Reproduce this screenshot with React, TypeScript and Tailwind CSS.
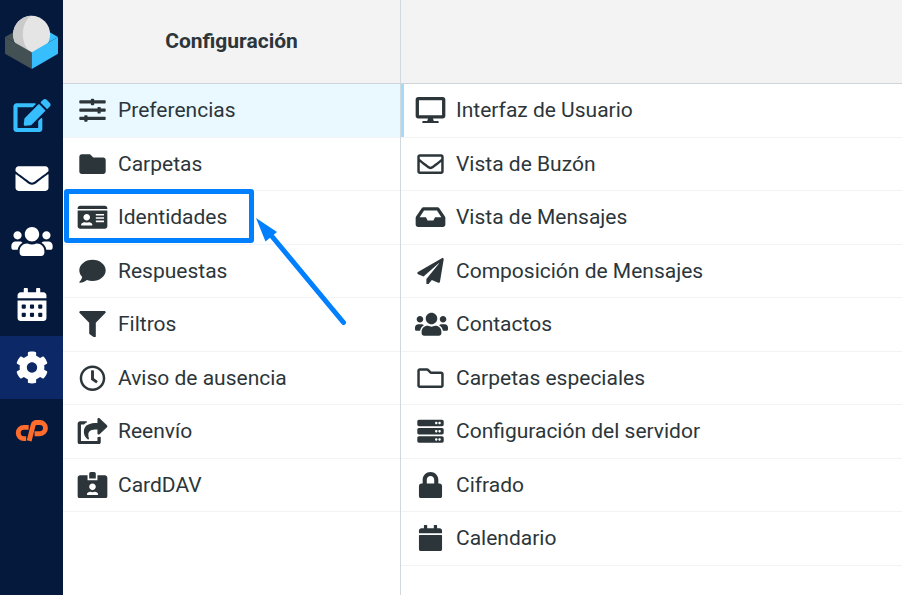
import type { IconType } from "react-icons";
import {
  FaCalendar,
  FaCalendarAlt,
  FaCog,
  FaComment,
  FaDesktop,
  FaEdit,
  FaEnvelope,
  FaFilter,
  FaFolder,
  FaIdCard,
  FaIdCardAlt,
  FaInbox,
  FaLock,
  FaPaperPlane,
  FaRegClock,
  FaRegEnvelope,
  FaRegFolder,
  FaServer,
  FaShareSquare,
  FaSlidersH,
  FaUsers,
} from "react-icons/fa";

type Item = {
  label: string;
  icon: IconType;
  iconClass?: string;
  selected?: boolean;
  marked?: boolean;
};

type Task = {
  name: string;
  icon: IconType;
  className: string;
};

// hosting panel mark: an open ring joined to a slanted bowl
const PanelMark: IconType = ({ className }) => (
  <svg viewBox="-4.5 -6 41.25 33" className={className} fill="none" stroke="currentColor" strokeWidth="4.9">
    <path d="M12.8 7.4H8a5.6 5.6 0 0 0 0 11.2h2.3" strokeLinejoin="round" />
    <path d="M13.3 20.9 17.2 5.3Q18 2.5 20.6 2.5H24a5.6 5.6 0 0 1 0 11.2H18.7" />
  </svg>
);

const tasks: Task[] = [
  { name: "compose", icon: FaEdit, className: "text-[#37beff]" },
  { name: "mail", icon: FaEnvelope, className: "text-white" },
  { name: "contacts", icon: FaUsers, className: "text-white" },
  { name: "calendar", icon: FaCalendarAlt, className: "text-white" },
  { name: "settings", icon: FaCog, className: "text-white bg-[#0c2866]" },
  { name: "cpanel", icon: PanelMark, className: "text-[#ff6c2c]" },
];

const sections: Item[] = [
  { label: "Preferencias", icon: FaSlidersH, selected: true },
  { label: "Carpetas", icon: FaFolder },
  { label: "Identidades", icon: FaIdCard, marked: true },
  { label: "Respuestas", icon: FaComment },
  { label: "Filtros", icon: FaFilter },
  { label: "Aviso de ausencia", icon: FaRegClock },
  { label: "Reenvío", icon: FaShareSquare },
  { label: "CardDAV", icon: FaIdCardAlt },
];

const preferences: Item[] = [
  { label: "Interfaz de Usuario", icon: FaDesktop },
  { label: "Vista de Buzón", icon: FaRegEnvelope },
  { label: "Vista de Mensajes", icon: FaInbox },
  { label: "Composición de Mensajes", icon: FaPaperPlane },
  { label: "Contactos", icon: FaUsers, iconClass: "ml-[2px]" },
  { label: "Carpetas especiales", icon: FaRegFolder },
  { label: "Configuración del servidor", icon: FaServer },
  { label: "Cifrado", icon: FaLock },
  { label: "Calendario", icon: FaCalendar },
];

const Logo = () => (
  <svg viewBox="0 0 63 84" className="block h-[84px] w-[63px]">
    <path d="M5 37 31.8 22V52Z" fill="#445154" />
    <path d="M58 37 31.8 22V52Z" fill="#37beff" />
    <circle cx="31.6" cy="34.3" r="18.5" fill="#e5e5e5" />
    <path d="M31.6 15.8a18.5 18.5 0 0 0 0 37C20 46 20 22 31.6 15.8Z" fill="#cacaca" />
    <path d="M5 37 31.8 52.3V69L5 53.8Z" fill="#445154" />
    <path d="M58 37 31.8 52.3V69L58 53.8Z" fill="#37beff" />
  </svg>
);

const Arrow = () => (
  <svg
    viewBox="0 0 96 112"
    className="pointer-events-none absolute top-[25px] left-[192px] z-10 h-[112px] w-[96px]"
  >
    <path d="M15 18 88.5 106.5" stroke="#0080ff" strokeWidth="5" strokeLinecap="round" />
    <path d="M1 2 22 16 10.5 25.5Z" fill="#0080ff" />
  </svg>
);

const Row = ({ label, icon: Icon, iconClass = "", selected, marked }: Item) => (
  <li
    className={`relative flex h-[53.5px] items-center border-b border-[#f1f3f4] pl-[14px] ${
      selected ? "bg-[#eaf8ff]" : ""
    }`}
  >
    <span className="flex w-[30px] shrink-0 justify-center">
      {/* box fits the widest glyph, narrower ones stay centered */}
      <Icon className={`h-[26.4px] w-[33px] shrink-0 ${iconClass}`} />
    </span>
    <span className="ml-[11px] whitespace-nowrap pt-[1.4px]">{label}</span>
    {selected && <span className="absolute top-0 -right-1 h-full w-[3px] bg-[#a1dcfb]" />}
    {marked && (
      <>
        <span className="absolute -top-[2px] left-px h-[54px] w-[190px] rounded-[3px] border-5 border-[#0080ff]" />
        <Arrow />
      </>
    )}
  </li>
);

const App = () => {
  return (
    <div className="flex h-[595px] w-[902px] overflow-hidden bg-white font-['Roboto',sans-serif] text-[21px] text-[#2c363a]">
      <nav className="w-[63px] shrink-0 bg-[#05193c]">
        <Logo />
        {tasks.map(({ name, icon: Icon, className }) => (
          <div key={name} className={`flex h-[63px] items-center justify-center pl-px ${className}`}>
            <Icon className="h-[33px] w-[42px] shrink-0" />
          </div>
        ))}
      </nav>

      <section className="w-[338px] shrink-0 border-r border-[#d2d9dc]">
        <h1 className="flex h-[84px] items-center justify-center border-b border-[#ced4d8] bg-[#f3f3f3] font-bold">
          Configuración
        </h1>
        <ul>
          {sections.map((s) => (
            <Row key={s.label} {...s} />
          ))}
        </ul>
      </section>

      <section className="flex-1">
        <div className="h-[84px] border-b border-[#ced4d8] bg-[#f3f3f3]" />
        <ul>
          {preferences.map((p) => (
            <Row key={p.label} {...p} />
          ))}
        </ul>
      </section>
    </div>
  );
};

export default App;
